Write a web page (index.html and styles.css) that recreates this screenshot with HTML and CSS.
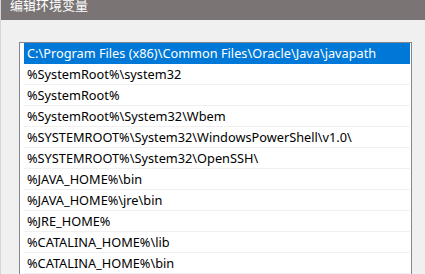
FILE: index.html
```html
<!DOCTYPE html>
<html lang="zh-CN">
  <head>
    <meta charset="UTF-8" />
    <title>编辑环境变量</title>
    <link rel="stylesheet" href="styles.css">
  </head>
  <body>
    <div class="window">
      <div class="title-bar">
        <span class="title">编辑环境变量</span>
      </div>
      <div class="content">
        <ul class="path-list">
          <li class="selected">C:\Program Files (x86)\Common Files\Oracle\Java\javapath</li>
          <li>%SystemRoot%\system32</li>
          <li>%SystemRoot%</li>
          <li>%SystemRoot%\System32\Wbem</li>
          <li>%SYSTEMROOT%\System32\WindowsPowerShell\v1.0\</li>
          <li>%SYSTEMROOT%\System32\OpenSSH\</li>
          <li>%JAVA_HOME%\bin</li>
          <li>%JAVA_HOME%\jre\bin</li>
          <li>%JRE_HOME%</li>
          <li>%CATALINA_HOME%\lib</li>
          <li>%CATALINA_HOME%\bin</li>
        </ul>
      </div>
    </div>
  </body>
</html>
```

FILE: styles.css
```css
html, body {
  margin: 0;
  padding: 0;
  height: 100%;
  overflow: hidden;
}
body {
  font-family: "Noto Sans", "Noto Sans CJK SC", sans-serif;
  font-size: 12.75px;
  background-color: #f0f0f0;
}
.window {
  height: 100%;
  border-left: 1px solid #d6d6d6;
}
.title-bar {
  height: 20px;
  background-color: #7a7574;
  overflow: hidden;
}
.title {
  display: block;
  margin-top: -5px;
  padding-left: 9px;
  color: #fff;
  font-family: "Noto Sans CJK SC", sans-serif;
  font-size: 13px;
  line-height: 20px;
}
.content {
  padding: 22px 0 0 18px;
}
.path-list {
  list-style: none;
  margin: 0;
  padding: 0 1px 0 4px;
  width: 386px;
  border: 1px solid #828790;
  border-bottom: none;
  background-color: #fff;
}
.path-list li {
  height: 20px;
  line-height: 21px;
  padding-left: 3px;
  border-bottom: 1px solid #f0f0f0;
  color: #000;
  white-space: nowrap;
}
.path-list li.selected {
  background-color: #0078d7;
  border-bottom-color: #0078d7;
  color: #fff;
}
```
